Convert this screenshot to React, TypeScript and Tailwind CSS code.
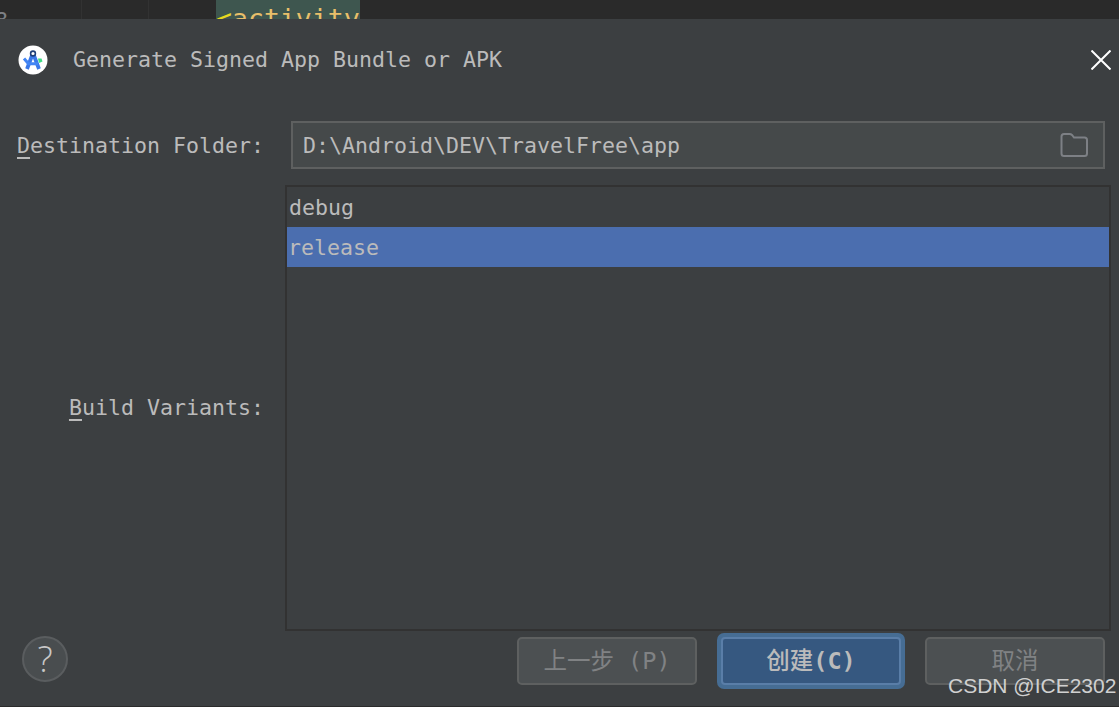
const mono = "font-['DejaVu_Sans_Mono','Liberation_Mono',monospace]";
const cjk = "font-['DejaVu_Sans_Mono','Noto_Sans_CJK_SC',monospace]";

function Logo() {
  return (
    <svg width="30" height="30" viewBox="0 0 30 30" className="shrink-0">
      <circle cx="15" cy="15" r="14.5" fill="#ffffff" />
      <path d="M15 8 L9 24" stroke="#3a78e8" strokeWidth="3.8" fill="none" />
      <path d="M15 8 L21 24" stroke="#3a78e8" strokeWidth="3.8" fill="none" />
      <path d="M6 13.5 L10.5 18.8 L20 18.8" stroke="#4285f4" strokeWidth="3" fill="none" />
      <circle cx="15" cy="8.5" r="2.4" fill="#ffffff" stroke="#1f3f7a" strokeWidth="1.6" />
      <path d="M20 13.5 L23.5 13.5 L24.5 16.5 L21 18 Z" fill="#3ddc84" />
    </svg>
  );
}

function Folder() {
  return (
    <svg width="28" height="24" viewBox="0 0 28 24" fill="none" stroke="#7d8085" strokeWidth="2">
      <path d="M1.5 3.5 Q1.5 1 4 1 H9.5 Q11 1 12 2 L14 4.5 H24.5 Q27 4.5 27 7 V20.5 Q27 23 24.5 23 H4 Q1.5 23 1.5 20.5 Z" />
    </svg>
  );
}

export default function App() {
  return (
    <div className={`relative flex h-[707px] w-[1119px] flex-col overflow-hidden bg-[#3c3f41] ${mono}`}>
      <div className="flex h-[19px] shrink-0 overflow-hidden bg-[#2a2a2a]">
        <div className="h-full w-[82px] border-r border-[#323232] text-[21.6px] leading-[20px] text-[#7d8085]">
          <span className="ml-[-5px] mt-[11px] block">8</span>
        </div>
        <div className="h-full w-[67px] border-r border-[#323232]" />
        <div className="ml-[67px] h-full w-[144px] whitespace-nowrap bg-[#3e564f] text-[26.5px] leading-[38px] text-[#e8bf6a]">
          <span className="text-[#e6d820]">&lt;</span>activity
        </div>
      </div>

      <div className="flex min-h-0 flex-1 flex-col border-b border-[#2b2b2b]">
        <div className="flex h-[81px] shrink-0 items-center pl-[18px] pr-[8px]">
          <Logo />
          <span className="ml-[25px] flex-1 pt-[2px] text-[21.6px] text-[#bbbbbb]">
            Generate Signed App Bundle or APK
          </span>
          <svg width="20" height="20" viewBox="0 0 20 20" stroke="#ffffff" strokeWidth="2">
            <path d="M0.5 0.5 L19.5 19.5 M19.5 0.5 L0.5 19.5" />
          </svg>
        </div>

        <div className="mt-[21px] flex h-[48px] shrink-0 items-center pl-[17px] pr-[14px]">
          <span className="w-[274px] shrink-0 pt-[2px] text-[21.6px] text-[#bbbbbb]">
            <span className="underline decoration-[2px] underline-offset-[4px]">D</span>estination Folder:
          </span>
          <div className="flex h-full flex-1 items-center justify-between border-2 border-[#5e6060] bg-[#45494a] pl-[10px] pr-[15px]">
            <span className="pt-[2px] text-[21.6px] text-[#bbbbbb]">D:\Android\DEV\TravelFree\app</span>
            <Folder />
          </div>
        </div>

        <div className="mt-[16px] flex h-[446px] shrink-0 pr-[8px]">
          <div className="flex w-[285px] shrink-0 items-center justify-end pr-[21px]">
            <span className="text-[21.6px] text-[#bbbbbb]">
              <span className="underline decoration-[2px] underline-offset-[4px]">B</span>uild Variants:
            </span>
          </div>
          <div className="flex-1 border-2 border-[#323232] text-[21.6px] text-[#bbbbbb]">
            <div className="flex h-[40px] items-center pl-[2px] pt-[2px]">debug</div>
            <div className="flex h-[40px] items-center bg-[#4b6eaf] pl-[1px] pt-[2px]">release</div>
          </div>
        </div>

        <div className="flex min-h-0 flex-1 items-start pl-[22px] pr-[14px] pt-[2px]">
          <div className="mt-[3px] flex h-[46px] w-[46px] items-center justify-center rounded-full border-2 border-[#5a5d5f] bg-[#494d4f] text-[36px] font-light leading-none text-[#c8c8c8] font-['Open_Sans',sans-serif]">
            ?
          </div>
          <div className="ml-auto flex items-center gap-[20px]">
            <div className={`flex h-[48px] w-[180px] items-center justify-center whitespace-nowrap rounded-[5px] border-2 border-[#5e6060] bg-[#4c5052] pt-[2px] text-[23.5px] text-[#808284] ${cjk}`}>
              上一步 (P)
            </div>
            <div className="rounded-[7px] bg-[#466d94] p-[4px]">
              <div className={`flex h-[48px] w-[180px] items-center justify-center whitespace-nowrap rounded-[4px] border-2 border-[#5a7ea8] bg-[#365880] pt-[2px] text-[23.5px] font-medium text-[#bbbbbb] ${cjk}`}>
                创建<span className="font-bold">(C)</span>
              </div>
            </div>
            <div className={`flex h-[48px] w-[180px] items-center justify-center whitespace-nowrap rounded-[5px] border-2 border-[#5e6060] bg-[#4c5052] pt-[2px] text-[23.5px] text-[#808284] ${cjk}`}>
              取消
            </div>
          </div>
        </div>
      </div>

      <div className="absolute left-[948px] top-[672px] whitespace-nowrap text-[21px] leading-[28px] text-[#d0d0d0] font-['Liberation_Sans',sans-serif]">
        CSDN @ICE2302
      </div>
    </div>
  );
}
